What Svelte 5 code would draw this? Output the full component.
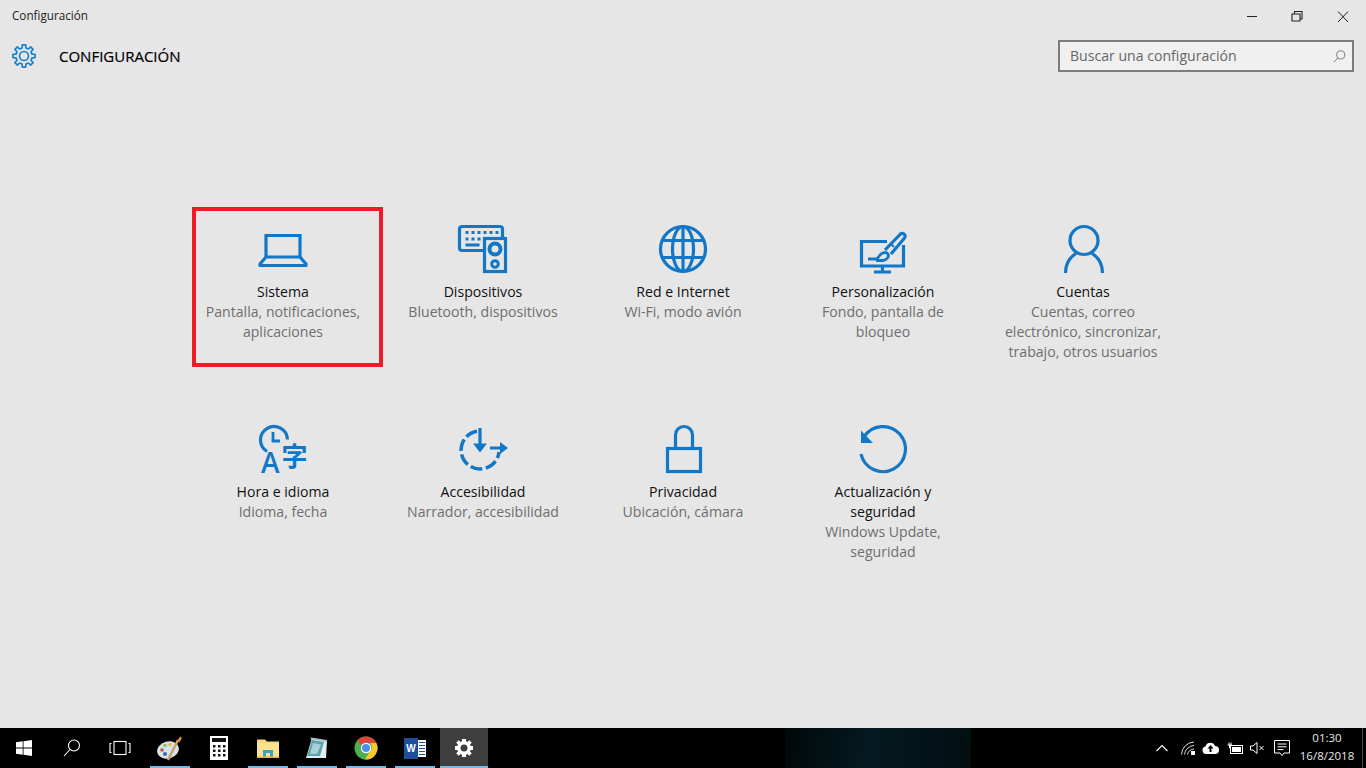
<script>
  const tiles = [
    { id: 'laptop', name: ['Sistema'], sub: ['Pantalla, notificaciones,', 'aplicaciones'], selected: true },
    { id: 'devices', name: ['Dispositivos'], sub: ['Bluetooth, dispositivos'] },
    { id: 'globe', name: ['Red e Internet'], sub: ['Wi-Fi, modo avión'] },
    { id: 'brush', name: ['Personalización'], sub: ['Fondo, pantalla de', 'bloqueo'] },
    { id: 'person', name: ['Cuentas'], sub: ['Cuentas, correo', 'electrónico, sincronizar,', 'trabajo, otros usuarios'] },
    { id: 'time', name: ['Hora e idioma'], sub: ['Idioma, fecha'] },
    { id: 'access', name: ['Accesibilidad'], sub: ['Narrador, accesibilidad'] },
    { id: 'lock', name: ['Privacidad'], sub: ['Ubicación, cámara'] },
    { id: 'update', name: ['Actualización y', 'seguridad'], sub: ['Windows Update,', 'seguridad'] }
  ];

  function gear(cx, cy, ro, ri, teeth) {
    const pts = [];
    const step = (Math.PI * 2) / teeth;
    for (let i = 0; i < teeth; i++) {
      const a = i * step - Math.PI / 2;
      const w = step * 0.2;
      const g = step * 0.3;
      const p = (r, t) => `${(cx + r * Math.cos(t)).toFixed(2)} ${(cy + r * Math.sin(t)).toFixed(2)}`;
      pts.push(p(ri, a - g), p(ro, a - w), p(ro, a + w), p(ri, a + g));
    }
    return 'M' + pts.join('L') + 'Z';
  }
  const headerGear = gear(12, 12, 11.2, 8.2, 8);
  const barGear = gear(9, 9, 9, 6.6, 8);
</script>

{#snippet icon(id)}
  <svg class="tile-icon" viewBox="0 0 50 50" width="50" height="50" fill="none" stroke="#1277c6" stroke-width="3.2">
    {#if id === 'laptop'}
      <path d="M8 32V10.500H42V32" />
      <path d="M8 32H42L48 39V40.500H2V39Z" stroke-linejoin="round" />
    {:else if id === 'devices'}
      <path d="M25 25.500H4A2.500 2.500 0 0 1 1.500 23V4A2.500 2.500 0 0 1 4 1.500H42A2.500 2.500 0 0 1 44.500 4V12" />
      <rect x="26.500" y="13.500" width="21" height="33" />
      <circle cx="37" cy="24" r="5.500" stroke-width="4" />
      <circle cx="37" cy="39" r="3.300" stroke-width="3" />
      <path d="M7.500 7.500h3m3 0h3m3 0h3m3 0h3m3 0h3m3 0h3M7.500 14h3m3 0h3m3 0h3M7.500 20h14" stroke-width="2.800" />
    {:else if id === 'globe'}
      <circle cx="25" cy="24" r="22.500" />
      <ellipse cx="25" cy="24" rx="10.500" ry="22.500" />
      <path d="M25 1.500V46.500M5 15.500H45M5 32.500H45" />
    {:else if id === 'brush'}
      <path d="M29 16.500H3.500V41H45.500V20" />
      <path d="M24.500 42V47M16 47H33" />
      <path d="M27 25L42 9.500A2.800 2.800 0 0 1 46.500 13L33 29" />
      <path d="M10 34H18C20 34 21 31 22.500 29.500C24.500 27.500 28 26.500 30 29C31.500 31.500 29 35 25 35.500H18" stroke-width="2.800" />
      <path d="M33 19l3 3" stroke-width="2" />
    {:else if id === 'person'}
      <circle cx="26" cy="15.500" r="14" />
      <path d="M7.500 48C7.500 39 11.500 32.500 18 28.500M44.500 48C44.500 39 40.500 32.500 34 28.500" />
    {:else if id === 'time'}
      <path d="M9 26.500A13.500 13.500 0 1 1 29.500 14.500" />
      <path d="M15 7V16H22" stroke-width="2.800" />
      <text class="glyph-a" x="3" y="48">A</text>
      <text class="glyph-z" x="23.500" y="41">字</text>
    {:else if id === 'access'}
      <path d="M19 6.200A19 19 0 1 0 41 27" stroke-dasharray="12 3.500" stroke-width="3.500" />
      <path d="M22 3V21M32 23H44" />
      <path d="M15 18.500H29L22 27.500Z M42 17L50 23L42 29Z" fill="#1277c6" stroke="none" />
    {:else if id === 'lock'}
      <rect x="9.500" y="23.500" width="33" height="23" />
      <path d="M17.500 23V10A8.500 8.500 0 0 1 34.500 10V23" />
    {:else if id === 'update'}
      <path d="M6 12A22.500 22.500 0 1 1 3 29" />
      <path d="M3 5.500V18H15Z" fill="#1277c6" stroke="none" />
    {/if}
  </svg>
{/snippet}

<div class="screen">
  <div class="window">
    <div class="titlebar">
      <span class="title">Configuración</span>
      <div class="controls">
        <svg width="46" height="32" viewBox="0 0 46 32" fill="none" stroke="#222"><path d="M19 16.500H29" /></svg>
        <svg width="46" height="32" viewBox="0 0 46 32" fill="none" stroke="#222" stroke-width="1.100"><path d="M18 14H26V21H18Z M20.500 14V11.500H28V19H26" /></svg>
        <svg width="46" height="32" viewBox="0 0 46 32" fill="none" stroke="#222"><path d="M18 11.500L28 22M28 11.500L18 22" /></svg>
      </div>
    </div>

    <header class="header">
      <div class="brand">
        <svg width="24" height="24" viewBox="0 0 24 24" fill="none" stroke="#1a80cc" stroke-width="1.700">
          <path d={headerGear} stroke-linejoin="round" />
          <circle cx="12" cy="12" r="4.500" />
        </svg>
        <h1>CONFIGURACIÓN</h1>
      </div>
      <div class="search">
        <span>Buscar una configuración</span>
        <svg width="13" height="13" viewBox="0 0 16 16" fill="none" stroke="#777" stroke-width="1.200"><circle cx="9.500" cy="6" r="5" /><path d="M6 9.800L1 15" /></svg>
      </div>
    </header>

    <main class="grid">
      {#each tiles as t}
        <div class="tile">
          {#if t.selected}<div class="marker"></div>{/if}
          {@render icon(t.id)}
          <div class="name">{#each t.name as l}<div>{l}</div>{/each}</div>
          <div class="sub">{#each t.sub as l}<div>{l}</div>{/each}</div>
        </div>
      {/each}
    </main>
  </div>

  <footer class="taskbar">
    <div class="wallpaper"></div>
    <div class="sys">
      <svg width="16" height="16" viewBox="0 0 16 16" fill="#fff"><path d="M0 2.300L6.700 1.300V7.600H0Z M7.500 1.200L16 0V7.600H7.500Z M0 8.400H6.700V14.700L0 13.700Z M7.500 8.400H16V16L7.500 14.800Z" /></svg>
    </div>
    <div class="sys">
      <svg width="18" height="18" viewBox="0 0 18 18" fill="none" stroke="#fff" stroke-width="1.100"><circle cx="11" cy="6.500" r="5.500" /><path d="M7 10.500L1 17" /></svg>
    </div>
    <div class="sys">
      <svg width="22" height="16" viewBox="0 0 22 16" fill="none" stroke="#fff" stroke-width="1.100"><rect x="5" y="1.500" width="12" height="13" /><path d="M2.500 3.500H1V12.500H2.500M19.500 3.500H21V12.500H19.500" /></svg>
    </div>

    <div class="apps">
      <div class="app open">
        <svg width="26" height="26" viewBox="0 0 26 26">
          <ellipse cx="11" cy="15" rx="11" ry="8.500" fill="#d5e4ee" transform="rotate(-15 11 15)" />
          <circle cx="5" cy="15" r="1.800" fill="#c0504d" />
          <circle cx="8" cy="10.500" r="1.800" fill="#8fbf5a" />
          <circle cx="13" cy="9.500" r="1.800" fill="#e9b93a" />
          <circle cx="8" cy="19" r="2" fill="#3e6f99" />
          <path d="M11 25L21 5" stroke="#c9a26b" stroke-width="2.500" />
          <path d="M20 6L23 1.500L25 3L22.500 7.500Z" fill="#d8884a" />
        </svg>
      </div>
      <div class="app">
        <svg width="18" height="24" viewBox="0 0 18 24">
          <rect width="18" height="24" fill="#fff" />
          <rect x="2" y="2" width="14" height="4" fill="#111" />
          {#each [9, 13.500, 18] as y}
            {#each [3, 8, 13] as x}<rect {x} {y} width="2.500" height="2.500" fill="#111" />{/each}
          {/each}
        </svg>
      </div>
      <div class="app open">
        <svg width="22" height="20" viewBox="0 0 22 20">
          <path d="M0 1.500H8L10 3.500H22V20H0Z" fill="#f6d77e" />
          <rect y="5" width="22" height="15" fill="#fbe08e" />
          <path d="M6 12H16V20H13V15H9V20H6Z" fill="#34a6c4" />
          <rect y="18.500" width="22" height="1.500" fill="#e3b955" />
        </svg>
      </div>
      <div class="app open">
        <svg width="24" height="24" viewBox="0 0 24 24">
          <path d="M7 2L22 5L21 22L1 22Z" fill="#e3ecee" />
          <path d="M7 4L19 6L15 20L2 20Z" fill="#5da3ad" />
          <path d="M6 1.500L22 4L21.500 6L5.500 3.500Z" fill="#a8c4ca" />
          <path d="M8 7L16 8.500L12 18L5 18Z" fill="#a7d0d4" />
        </svg>
      </div>
      <div class="app open">
        <svg width="24" height="24" viewBox="0 0 24 24">
          <circle cx="12" cy="12" r="11.500" fill="#4caf50" />
          <path d="M12 .5A11.500 11.500 0 0 1 22.300 7H12A5 5 0 0 0 7.500 10L3.500 4.200A11.500 11.500 0 0 1 12 .5Z" fill="#e0443a" />
          <path d="M22.300 7A11.500 11.500 0 0 1 11 23.500L16.300 14.500A5 5 0 0 0 16 7Z" fill="#f9c92c" />
          <circle cx="12" cy="12" r="5.200" fill="#fff" />
          <circle cx="12" cy="12" r="4" fill="#4a8fe8" />
        </svg>
      </div>
      <div class="app open">
        <div class="word"><span class="w">W</span><span class="page"><i></i><i></i><i></i><i></i><i></i></span></div>
      </div>
      <div class="app active">
        <svg width="18" height="18" viewBox="0 0 18 18"><path d={barGear} fill="#fff" stroke="#fff" stroke-linejoin="round" /><circle cx="9" cy="9" r="3.500" fill="#3f3f3f" /></svg>
      </div>
    </div>

    <div class="tray">
      <svg class="t-chev" width="12" height="8" viewBox="0 0 12 8" fill="none" stroke="#fff" stroke-width="1.100"><path d="M.5 7L6 1.500L11.500 7" /></svg>
      <svg class="t-wifi" width="14" height="14" viewBox="0 0 14 14" fill="none" stroke="#ddd"><path d="M.5 13.500A13 13 0 0 1 13 1M3.500 13.500A10 10 0 0 1 13 4.500M6.500 13.500A7 7 0 0 1 13 8" /><rect x="10" y="10" width="4" height="4" fill="#fff" stroke="none" /></svg>
      <svg class="t-cloud" width="17" height="12" viewBox="0 0 17 12"><path d="M4 12A3.800 3.800 0 0 1 3.500 4.500A5 5 0 0 1 13 4A4 4 0 0 1 13 12Z" fill="#fff" /><path d="M8.500 3L5.500 6.500H7.500V10H9.500V6.500H11.500Z" fill="#000" /></svg>
      <svg class="t-batt" width="16" height="12" viewBox="0 0 16 12" fill="none" stroke="#fff"><rect x="3.500" y="3.500" width="12" height="8" /><rect x="5" y="5" width="9" height="5" fill="#fff" stroke="none" /><path d="M.5 3H5M2 .5V3M4 .5V3M2.500 3V6H3.500" /></svg>
      <svg class="t-vol" width="15" height="12" viewBox="0 0 15 12" fill="none" stroke="#fff"><path d="M.5 4H3L7 .5V11.500L3 8H.5Z" /><path d="M9.500 4L13.500 8M13.500 4L9.500 8" /></svg>
      <svg class="t-note" width="16" height="17" viewBox="0 0 16 17" fill="none" stroke="#fff"><path d="M.5 .5H15.500V13H10L8 15.500L6 13H.5Z" /><path d="M3.500 4H12.500M3.500 6.800H12.500M3.500 9.600H9.500" /></svg>
      <div class="clock"><div>01:30</div><div>16/8/2018</div></div>
      <div class="desk"></div>
    </div>
  </footer>
</div>

<style>
  :global(body) {
    margin: 0;
    overflow: hidden;
  }
  .screen {
    width: 1366px;
    height: 768px;
    display: flex;
    flex-direction: column;
    background: #e6e6e6;
    font-family: "Open Sans", "Noto Sans", sans-serif;
    color: #111;
  }
  .window {
    flex: 1;
    min-height: 0;
  }
  .titlebar {
    height: 32px;
    display: flex;
    align-items: center;
    justify-content: space-between;
  }
  .title {
    margin: 0 0 2px 12px;
    font-size: 11.700px;
    color: #222;
  }
  .controls {
    display: flex;
  }
  .controls svg {
    display: block;
  }
  .header {
    height: 48px;
    display: flex;
    align-items: center;
    justify-content: space-between;
    padding: 0 12px;
  }
  .brand {
    display: flex;
    align-items: center;
    gap: 23px;
  }
  .brand svg {
    display: block;
  }
  h1 {
    margin: 0;
    font-size: 15px;
    font-weight: 400;
    color: #000;
    -webkit-text-stroke: 0.2px #000;
  }
  .search {
    width: 292px;
    height: 28px;
    border: 2px solid #7d7d7d;
    background: #f0f0f0;
    display: flex;
    align-items: center;
    justify-content: space-between;
    font-size: 14.100px;
    color: #666;
  }
  .search span {
    margin: 0 0 2px 10px;
  }
  .search svg {
    margin-right: 6px;
  }
  .grid {
    display: grid;
    grid-template-columns: repeat(5, 200px);
    grid-auto-rows: 200px;
    padding: 145px 0 0 183px;
  }
  .tile {
    position: relative;
    display: flex;
    flex-direction: column;
    align-items: center;
    text-align: center;
    font-size: 14.100px;
    line-height: 20px;
  }
  .tile-icon {
    display: block;
    margin-bottom: 7px;
    overflow: visible;
  }
  .glyph-a {
    font-family: "Open Sans", sans-serif;
    font-size: 28px;
    font-weight: 600;
    fill: #1277c6;
    stroke: none;
  }
  .glyph-z {
    font-family: "Noto Sans CJK JP", "Noto Sans CJK SC", sans-serif;
    font-size: 26px;
    font-weight: 700;
    fill: #1277c6;
    stroke: none;
  }
  .name {
    color: #111;
  }
  .sub {
    color: #6e6e6e;
  }
  .marker {
    position: absolute;
    left: 9px;
    top: -18px;
    width: 191px;
    height: 160px;
    box-sizing: border-box;
    border: 4px solid #ed1c24;
  }
  .taskbar {
    position: relative;
    height: 40px;
    display: flex;
    background: #000;
    color: #fff;
    flex: none;
  }
  .wallpaper {
    position: absolute;
    left: 785px;
    top: 0;
    width: 186px;
    height: 40px;
    background: linear-gradient(100deg, #010709 0%, #041a20 45%, #020e11 100%);
  }
  .sys {
    position: relative;
    width: 48px;
    display: flex;
    align-items: center;
    justify-content: center;
  }
  .apps {
    position: relative;
    display: flex;
    margin-left: 1.500px;
  }
  .app {
    position: relative;
    width: 49px;
    display: flex;
    align-items: center;
    justify-content: center;
  }
  .app.open::after {
    content: "";
    position: absolute;
    left: 4.500px;
    right: 4.500px;
    bottom: 0;
    height: 2px;
    background: #76b9ed;
  }
  .app.active {
    background: #3f3f3f;
    width: 48px;
  }
  .app.active::after {
    content: "";
    position: absolute;
    left: 0;
    right: 0;
    bottom: 0;
    height: 2px;
    background: #76b9ed;
  }
  .word {
    position: relative;
    width: 22px;
    height: 21px;
    display: flex;
    align-items: center;
  }
  .w {
    position: relative;
    z-index: 1;
    width: 14px;
    height: 21px;
    background: #1f4e9c;
    color: #fff;
    font: 700 10px/21px "Liberation Sans", sans-serif;
    text-align: center;
  }
  .page {
    flex: 1;
    height: 17px;
    background: #fff;
    display: flex;
    flex-direction: column;
    justify-content: space-evenly;
    padding: 0 1px;
    box-sizing: border-box;
  }
  .page i {
    display: block;
    height: 1px;
    background: #1f4e9c;
  }
  .tray {
    position: absolute;
    right: 0;
    top: 0;
    bottom: 0;
    width: 210px;
    display: flex;
    align-items: center;
  }
  .tray svg {
    flex: none;
    display: block;
  }
  .t-wifi { margin-left: 13px; }
  .t-cloud { margin-left: 7px; }
  .t-batt { margin-left: 8px; }
  .t-vol { margin-left: 7px; }
  .t-note { margin-left: 9px; }
  .clock {
    width: 60px;
    margin: 0 0 2px 7px;
    text-align: center;
    font-size: 11.500px;
    line-height: 18px;
    color: #e8e8e8;
  }
  .desk {
    width: 1px;
    height: 40px;
    margin-left: auto;
    margin-right: 3px;
    background: #4a4a4a;
  }
</style>
